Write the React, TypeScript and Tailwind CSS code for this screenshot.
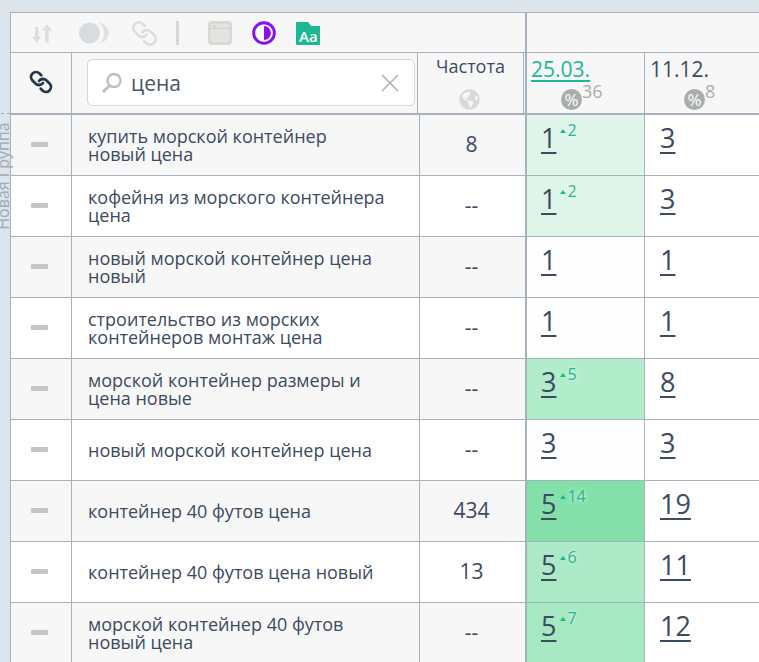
import React from "react";
import { FaGlobeAmericas } from "react-icons/fa";
import { Link as LinkGlyph } from "lucide-react";

type Row = { t: string[]; f: string; a: string; d?: string; bg: string; b: string; odd: boolean };

const rows: Row[] = [
  { t: ["купить морской контейнер", "новый цена"], f: "8", a: "1", d: "2", bg: "bg-[#dff5e9]", b: "3", odd: true },
  { t: ["кофейня из морского контейнера", "цена"], f: "--", a: "1", d: "2", bg: "bg-[#dff5e9]", b: "3", odd: false },
  { t: ["новый морской контейнер цена", "новый"], f: "--", a: "1", bg: "bg-[#fdfefd]", b: "1", odd: true },
  { t: ["строительство из морских", "контейнеров монтаж цена"], f: "--", a: "1", bg: "bg-[#fdfefd]", b: "1", odd: false },
  { t: ["морской контейнер размеры и", "цена новые"], f: "--", a: "3", d: "5", bg: "bg-[#b1edcb]", b: "8", odd: true },
  { t: ["новый морской контейнер цена"], f: "--", a: "3", bg: "bg-[#fdfefd]", b: "3", odd: false },
  { t: ["контейнер 40 футов цена"], f: "434", a: "5", d: "14", bg: "bg-[#84e0a9]", b: "19", odd: true },
  { t: ["контейнер 40 футов цена новый"], f: "13", a: "5", d: "6", bg: "bg-[#ace9c7]", b: "11", odd: false },
  { t: ["морской контейнер 40 футов", "новый цена"], f: "--", a: "5", d: "7", bg: "bg-[#a6e8c2]", b: "12", odd: true },
];

const Percent = () => (
  <span className="w-[21px] h-[21px] rounded-full bg-[#a9adad] text-white flex items-center justify-center text-[17px] leading-none">%</span>
);

export default function App() {
  return (
    <div
      className="relative w-[759px] h-[662px] overflow-hidden bg-[#dde5ec] pl-[10px] pt-3 text-[#3c4b60]"
      style={{ fontFamily: '"Open Sans", sans-serif' }}
    >
      <div className="absolute left-[-62px] top-[167px] w-[130px] -rotate-90 text-[16px] leading-[18px] text-[#a3a9ae] whitespace-nowrap text-center">Новая Группа</div>
      <div className="absolute left-px top-[113px] w-[9px] border-t border-dashed border-[#a3a9ae]" />

      <div className="w-[749px] bg-white border-l border-[#a7b1bb]">
        <div className="flex h-[41px] bg-[#f7f7f7] border-t border-b border-[#a7b1bb]">
          <div className="w-[514px] flex items-center pl-[21px] pt-px">
            <svg width="20" height="19" viewBox="0 0 20 19" fill="#dcdede">
              <path d="M3 3h3.4v9.5H9.5L4.7 18.6 0 12.5h3zM13.2 18.6h3.4V6.5h3.4L14.9 0.4 9.8 6.5h3.4z" />
            </svg>
            <svg width="30" height="22" viewBox="0 0 30 22" className="ml-[27px]">
              <circle cx="10.5" cy="11" r="10.5" fill="#d8dcde" />
              <path d="M20 0.3a12 12 0 0 1 10 10.7a12 12 0 0 1-10 10.7a14 14 0 0 0 0-21.4z" fill="#e0e2e2" />
            </svg>
            <span className="ml-[22px] -scale-x-100"><LinkGlyph size={27} color="#dcdede" strokeWidth={2.4} /></span>
            <span className="ml-[18px] w-[3px] h-6 bg-[#d6d8d8]" />
            <svg width="24" height="24" viewBox="0 0 26 26" className="ml-[29px]">
              <rect x="1.5" y="1.5" width="23" height="23" rx="2.5" fill="#e6e4e0" stroke="#d8d8d6" strokeWidth="3" />
              <path d="M3 8h20" stroke="#d2d2d0" strokeWidth="1.5" />
              <circle cx="7" cy="5.5" r="1" fill="#bbb" />
            </svg>
            <svg width="24" height="24" viewBox="0 0 26 26" className="ml-5">
              <circle cx="13" cy="13" r="11.2" fill="#fff" stroke="#8a10f4" strokeWidth="3.2" />
              <path d="M13 5.5a7.5 7.5 0 0 1 0 15z" fill="#8a10f4" />
            </svg>
            <div className="relative ml-5 w-6 h-[23px]">
              <svg width="24" height="23" viewBox="0 0 24 23" className="absolute inset-0">
                <path d="M0 1q0-1 1-1h11l3 4h8q1 0 1 1v17q0 1-1 1H1q-1 0-1-1z" fill="#1cb894" />
              </svg>
              <span className="absolute left-[3px] top-[5px] text-[15px] leading-[18px] font-semibold text-white">Aa</span>
            </div>
          </div>
          <div className="flex-1 border-l-2 border-[#a7b1bb]" />
        </div>

        <div className="flex h-[62px] bg-[#f7f7f7] border-b-2 border-[#a7b1bb]">
          <div className="w-[61px] shrink-0 border-r border-[#a7b1bb] flex items-center justify-center pb-[3px] pr-px">
            <span className="-scale-x-100"><LinkGlyph size={24} color="#26364a" strokeWidth={2.8} /></span>
          </div>
          <div className="w-[346px] shrink-0 border-r border-[#a7b1bb] pl-[15px] pt-1.5">
            <div className="w-[328px] h-[47px] bg-white border border-[#d3d7da] rounded-[5px] flex items-center pl-[13px] pr-[15px]">
              <svg width="22" height="22" viewBox="0 0 22 22" fill="none" stroke="#bcbfc1" strokeWidth="2.4">
                <circle cx="13" cy="8.5" r="6.5" />
                <path d="M8.5 13.5L2 20" strokeWidth="3" />
              </svg>
              <span className="ml-2 flex-1 text-[21px] leading-none text-[#4a5462] pt-0.5">цена</span>
              <svg width="18" height="18" viewBox="0 0 18 18" stroke="#b0b4b8" strokeWidth="1.7" fill="none">
                <path d="M1 1l16 16M17 1L1 17" />
              </svg>
            </div>
          </div>
          <div className="w-[106px] shrink-0 border-r border-[#a7b1bb] flex flex-col items-center">
            <span className="text-[18px] leading-[20px] mt-[3px]">Частота</span>
            <span className="mt-[13px] mr-[2px] text-[#d8d9d9] text-[21px]"><FaGlobeAmericas /></span>
          </div>
          <div className="w-px shrink-0" />
          <div className="w-[120px] shrink-0 border-l-2 border-r border-[#a7b1bb] pl-1 flex flex-col">
            <span className="text-[21px] leading-[24px] mt-[4px] w-fit text-[#1cb894] underline decoration-2 underline-offset-[3px]">25.03.</span>
            <div className="flex items-start pl-[30px] mt-[1px]">
              <span className="mt-[7px]"><Percent /></span>
              <span className="text-[18px] leading-none text-[#a9adad]">36</span>
            </div>
          </div>
          <div className="flex-1 pl-[5px] flex flex-col">
            <span className="text-[21px] leading-[24px] mt-[4px]">11.12.</span>
            <div className="flex items-start pl-[34px] mt-[1px]">
              <span className="mt-[7px]"><Percent /></span>
              <span className="text-[18px] leading-none text-[#a9adad]">8</span>
            </div>
          </div>
        </div>

        {rows.map((r, i) => (
          <div key={i} className={`flex h-[61px] border-b border-[#a7b1bb] ${r.odd ? "bg-[#f7f7f7]" : "bg-white"}`}>
            <div className="w-[61px] shrink-0 border-r border-[#a7b1bb] flex items-center justify-center pr-[3px] pb-[2px]">
              <span className="w-[17px] h-[5px] rounded-[1px] bg-[#c3c5c6]" />
            </div>
            <div className="w-[348px] shrink-0 border-r border-[#a7b1bb] pl-4 flex flex-col justify-center text-[18px] leading-[18px]">
              {r.t.map((l) => (
                <span key={l}>{l}</span>
              ))}
            </div>
            <div className="w-[107px] shrink-0 flex items-center justify-center text-[21px] border-r-2 border-[#a7b1bb] pr-[2px]">{r.f}</div>
            <div className={`w-[118px] shrink-0 border-r border-[#a7b1bb] pl-[14px] pt-1.5 ${r.bg} flex items-start`}>
              <span className="text-[27px] leading-[34px] underline decoration-2 underline-offset-[4px]">{r.a}</span>
              {r.d && (
                <span className="ml-[4px] mt-[-1px] flex items-center text-[#1cb894] text-[16px] leading-[20px] [text-shadow:0_0_4px_#ffffff]">
                  <span className="w-0 h-0 mt-[2px] mr-[1px] border-l-[3px] border-r-[3px] border-b-[4px] border-l-transparent border-r-transparent border-b-[#1cb894]" />
                  {r.d}
                </span>
              )}
            </div>
            <div className="flex-1 bg-white pl-[15px] pt-1.5">
              <span className="text-[27px] leading-[34px] underline decoration-2 underline-offset-[4px]">{r.b}</span>
            </div>
          </div>
        ))}
      </div>
    </div>
  );
}
